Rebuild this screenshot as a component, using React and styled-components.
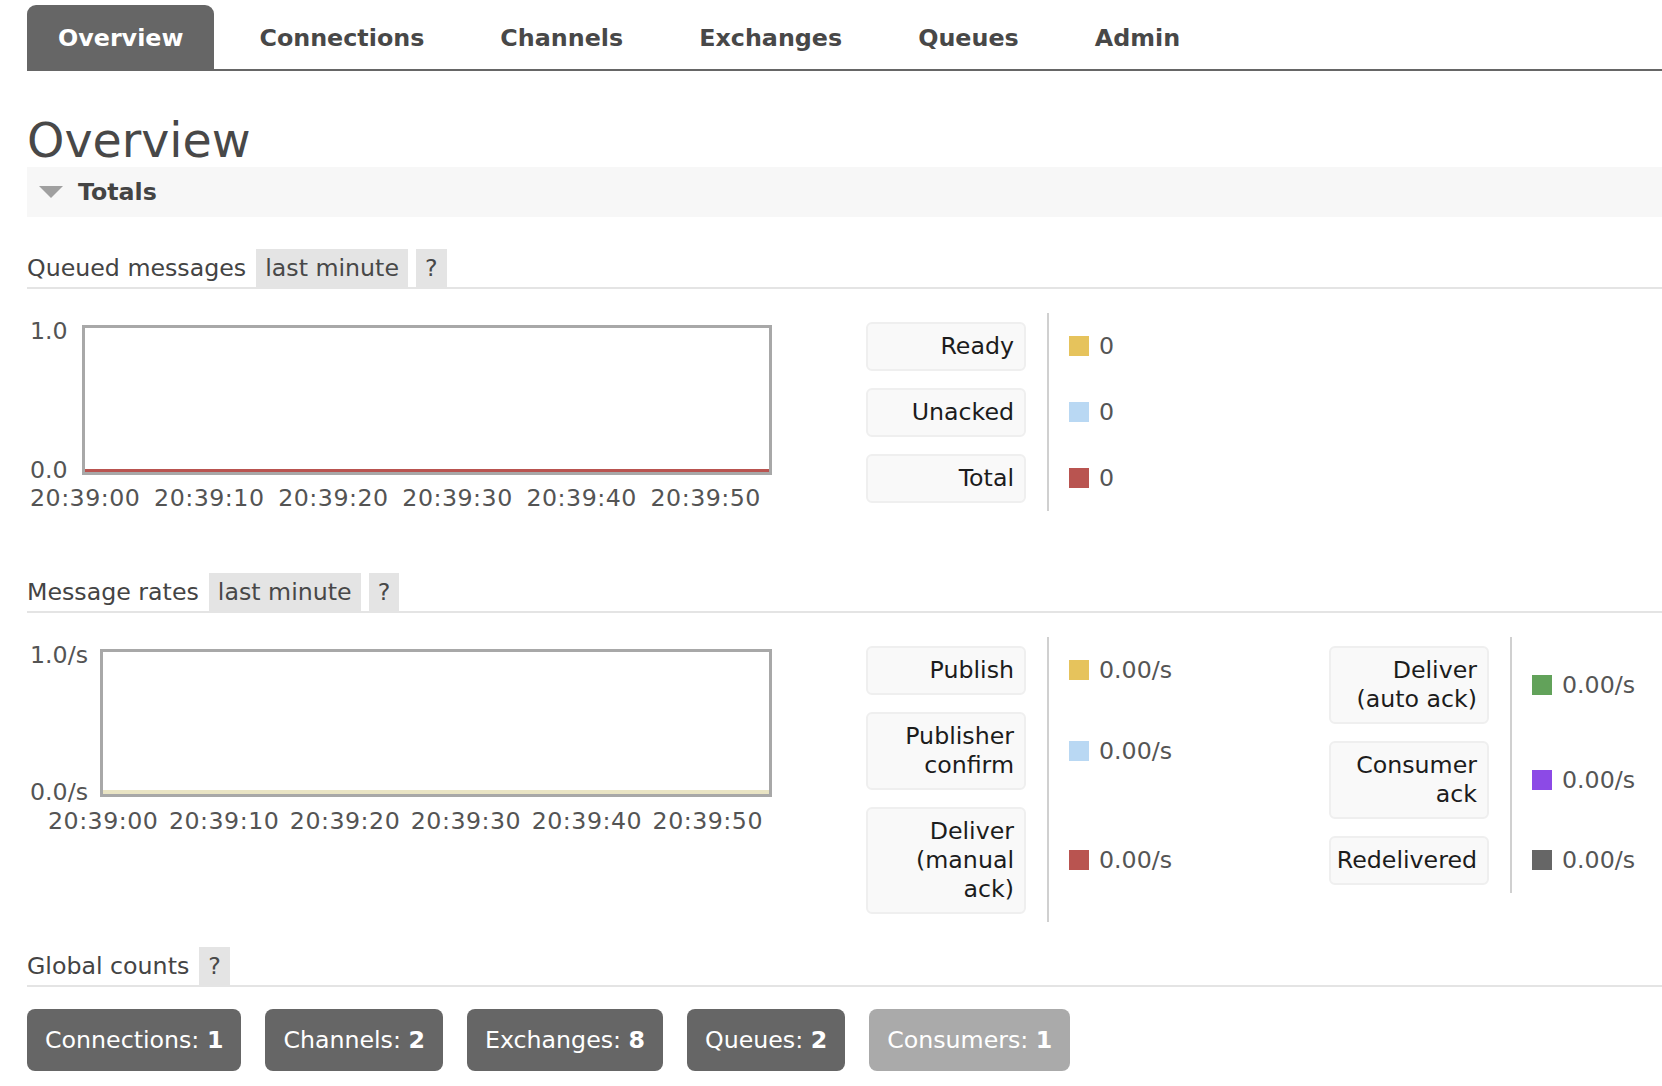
import React from 'react';
import styled, { createGlobalStyle } from 'styled-components';

const GlobalStyle = createGlobalStyle`
    html, body {
        margin: 0;
        padding: 0;
        background: #fff;
        overflow: hidden;
    }
    body {
        font-family: 'DejaVu Sans', Verdana, sans-serif;
        font-size: 23.7px;
        color: #484848;
    }
`;

const tabs = ['Overview', 'Connections', 'Channels', 'Exchanges', 'Queues', 'Admin'];
const times = ['20:39:00', '20:39:10', '20:39:20', '20:39:30', '20:39:40', '20:39:50'];

const colors = {
    yellow: '#e6c35c',
    blue: '#b9d8f3',
    red: '#b95450',
    green: '#62a25a',
    purple: '#8c4ae6',
    gray: '#666666',
};

function Chart({ top, bottom, axisWidth, height, lineColor, lineHeight, padLeft, padRight, labelGap }) {
    return (
        <ChartWrapper>
            <PlotRow $height={height}>
                <YAxis $width={axisWidth}>
                    <span>{top}</span>
                    <span>{bottom}</span>
                </YAxis>
                <PlotBox>
                    <Series $color={lineColor} $height={lineHeight} />
                </PlotBox>
            </PlotRow>
            <XAxis $padLeft={padLeft} $padRight={padRight} $gap={labelGap}>
                {times.map((t) => (
                    <span key={t}>{t}</span>
                ))}
            </XAxis>
        </ChartWrapper>
    );
}

function LegendGroup({ rows, valueWidth }) {
    return (
        <LegendGrid $valueWidth={valueWidth}>
            {rows.map((row) => (
                <React.Fragment key={row.label}>
                    <LabelCell>
                        <LabelBox>{row.label}</LabelBox>
                    </LabelCell>
                    <ValueCell>
                        <Swatch $color={row.color} />
                        {row.value}
                    </ValueCell>
                </React.Fragment>
            ))}
        </LegendGrid>
    );
}

function SectionHeading({ title, range, gap }) {
    return (
        <Heading $gap={gap}>
            <HeadingText>{title}</HeadingText>
            {range && <Pill>{range}</Pill>}
            <Pill>?</Pill>
        </Heading>
    );
}

function App() {
    return (
        <>
            <GlobalStyle />
            <Page>
                <TabBar>
                    {tabs.map((tab) => (
                        <Tab key={tab} $active={tab === 'Overview'}>
                            {tab}
                        </Tab>
                    ))}
                </TabBar>

                <Title>Overview</Title>
                <TotalsBar>
                    <Triangle />
                    Totals
                </TotalsBar>

                <SectionHeading title="Queued messages" range="last minute" gap={32} />
                <ChartRow>
                    <Chart
                        top="1.0"
                        bottom="0.0"
                        axisWidth={52}
                        height={150}
                        lineColor={colors.red}
                        lineHeight={3}
                        padLeft={0}
                        padRight={11}
                        labelGap={12}
                    />
                    <LegendArea>
                        <LegendGroup
                            valueWidth="200px"
                            rows={[
                                { label: 'Ready', color: colors.yellow, value: '0' },
                                { label: 'Unacked', color: colors.blue, value: '0' },
                                { label: 'Total', color: colors.red, value: '0' },
                            ]}
                        />
                    </LegendArea>
                </ChartRow>

                <SectionHeading title="Message rates" range="last minute" gap={62} />
                <ChartRow>
                    <Chart
                        top="1.0/s"
                        bottom="0.0/s"
                        axisWidth={70}
                        height={148}
                        lineColor="#e9e4c4"
                        lineHeight={4}
                        padLeft={18}
                        padRight={9}
                        labelGap={13}
                    />
                    <LegendArea>
                        <LegendGroup
                            valueWidth="282px"
                            rows={[
                                { label: 'Publish', color: colors.yellow, value: '0.00/s' },
                                { label: 'Publisher confirm', color: colors.blue, value: '0.00/s' },
                                { label: 'Deliver (manual ack)', color: colors.red, value: '0.00/s' },
                            ]}
                        />
                        <LegendGroup
                            valueWidth="150px"
                            rows={[
                                { label: 'Deliver (auto ack)', color: colors.green, value: '0.00/s' },
                                { label: 'Consumer ack', color: colors.purple, value: '0.00/s' },
                                { label: 'Redelivered', color: colors.gray, value: '0.00/s' },
                            ]}
                        />
                    </LegendArea>
                </ChartRow>

                <SectionHeading title="Global counts" gap={25} />
                <CountRow>
                    <CountButton>Connections: <b>1</b></CountButton>
                    <CountButton>Channels: <b>2</b></CountButton>
                    <CountButton>Exchanges: <b>8</b></CountButton>
                    <CountButton>Queues: <b>2</b></CountButton>
                    <CountButton $muted>Consumers: <b>1</b></CountButton>
                </CountRow>
            </Page>
        </>
    );
}

const Page = styled.div`
    padding-left: 27px;
    min-height: 1086px;
`;

const TabBar = styled.div`
    display: flex;
    padding-top: 5px;
    border-bottom: 2px solid #666;
`;

const Tab = styled.div`
    height: 64px;
    line-height: 67px;
    padding: 0 31px;
    margin-right: 14px;
    border-radius: 9px 9px 0 0;
    font-size: 23.8px;
    font-weight: bold;
    color: ${(props) => (props.$active ? '#fff' : '#484848')};
    background: ${(props) => (props.$active ? '#666' : 'transparent')};
`;

const Title = styled.h1`
    margin: 44px 0 0 0;
    font-size: 47.5px;
    line-height: 52px;
    font-weight: normal;
    color: #484848;
`;

const TotalsBar = styled.div`
    display: flex;
    align-items: center;
    height: 50px;
    padding-left: 12px;
    background: #f7f7f7;
    font-weight: bold;
    color: #444;
`;

const Triangle = styled.span`
    width: 0;
    height: 0;
    margin-right: 15px;
    border-left: 12px solid transparent;
    border-right: 12px solid transparent;
    border-top: 12px solid #a0a0a0;
`;

const Heading = styled.div`
    display: flex;
    align-items: stretch;
    height: 38px;
    line-height: 38px;
    margin-top: ${(props) => props.$gap}px;
    border-bottom: 2px solid #e4e4e4;
    color: #444;
`;

const HeadingText = styled.span`
    margin-right: 10px;
`;

const Pill = styled.span`
    padding: 0 9px;
    margin-right: 8px;
    background: #e4e4e4;
    color: #484848;
`;

const ChartRow = styled.div`
    display: flex;
    align-items: flex-start;
    margin-top: 24px;
`;

const ChartWrapper = styled.div`
    width: 742px;
    margin-left: 3px;
    padding-top: 12px;
    color: #545454;
`;

const PlotRow = styled.div`
    display: flex;
    height: ${(props) => props.$height}px;
`;

const YAxis = styled.div`
    width: ${(props) => props.$width}px;
    display: flex;
    flex-direction: column;
    justify-content: space-between;
    margin: -5px 0 -6px 0;
    line-height: 22px;
`;

const PlotBox = styled.div`
    flex: 1;
    display: flex;
    flex-direction: column;
    justify-content: flex-end;
    border: 3px solid #a8a8a8;
    background: #fff;
`;

const Series = styled.div`
    height: ${(props) => props.$height}px;
    background: ${(props) => props.$color};
`;

const XAxis = styled.div`
    display: flex;
    justify-content: space-between;
    margin-top: ${(props) => props.$gap}px;
    padding: 0 ${(props) => props.$padRight}px 0 ${(props) => props.$padLeft}px;
    line-height: 22px;
    letter-spacing: 0.5px;
`;

const LegendArea = styled.div`
    display: flex;
    align-items: flex-start;
    margin-left: 94px;
`;

const LegendGrid = styled.div`
    display: grid;
    grid-template-columns: 181px ${(props) => props.$valueWidth};
    align-content: start;
`;

const LabelCell = styled.div`
    padding: 8.5px 21px 8.5px 0;
`;

const LabelBox = styled.div`
    box-sizing: border-box;
    width: 160px;
    padding: 8px 10px 8px 0;
    line-height: 29px;
    text-align: right;
    color: #1c1c1c;
    background: #f9f9f9;
    border: 2px solid #efefef;
    border-radius: 6px;
`;

const ValueCell = styled.div`
    display: flex;
    align-items: center;
    padding-left: 20px;
    border-left: 2px solid #d0d0d0;
    color: #555;
`;

const Swatch = styled.span`
    width: 20px;
    height: 20px;
    margin-right: 10px;
    background: ${(props) => props.$color};
`;

const CountRow = styled.div`
    display: flex;
    gap: 24px;
    margin-top: 22px;
`;

const CountButton = styled.div`
    height: 62px;
    line-height: 62px;
    padding: 0 18px;
    border-radius: 8px;
    color: #fff;
    background: ${(props) => (props.$muted ? '#aaa' : '#666')};
`;

export default App;
